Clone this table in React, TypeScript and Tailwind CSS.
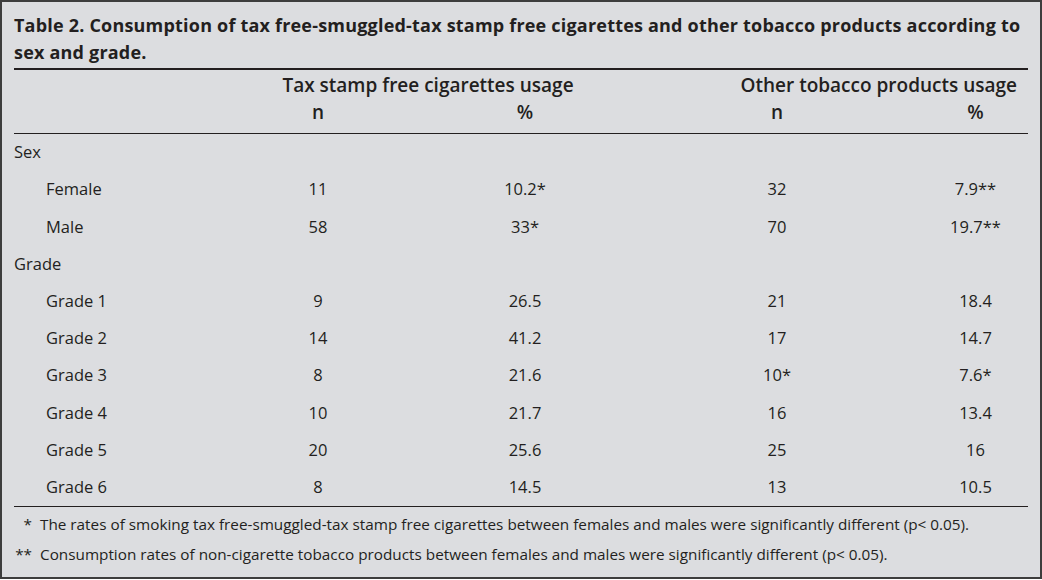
const rows = [
  { label: "Sex", group: true },
  { label: "Female", n1: "11", p1: "10.2*", n2: "32", p2: "7.9**" },
  { label: "Male", n1: "58", p1: "33*", n2: "70", p2: "19.7**" },
  { label: "Grade", group: true },
  { label: "Grade 1", n1: "9", p1: "26.5", n2: "21", p2: "18.4" },
  { label: "Grade 2", n1: "14", p1: "41.2", n2: "17", p2: "14.7" },
  { label: "Grade 3", n1: "8", p1: "21.6", n2: "10*", p2: "7.6*" },
  { label: "Grade 4", n1: "10", p1: "21.7", n2: "16", p2: "13.4" },
  { label: "Grade 5", n1: "20", p1: "25.6", n2: "25", p2: "16" },
  { label: "Grade 6", n1: "8", p1: "14.5", n2: "13", p2: "10.5" },
];

const notes = [
  {
    mark: "*",
    text: "The rates of smoking tax free-smuggled-tax stamp free cigarettes between females and males were significantly different (p< 0.05).",
  },
  {
    mark: "**",
    text: "Consumption rates of non-cigarette tobacco products between females and males were significantly different (p< 0.05).",
  },
];

const cols = "grid grid-cols-[204px_200px_214px_290px_107px]";

export default function App() {
  return (
    <div className="w-[1042px] h-[580px] bg-white font-['Open_Sans',sans-serif] text-[#231f20]">
      <div className="h-[579px] border-2 border-[#3d3d3d] bg-[#dcdde0] px-[12px] pt-[10px]">

        {/* Title */}
        <h1 className="text-[18px] leading-[27px] font-bold tracking-[0.2px]">
          Table 2. Consumption of tax free-smuggled-tax stamp free cigarettes and other tobacco products according to sex and grade.
        </h1>

        {/* Header */}
        <div className="mt-[2px] border-t-2 border-[#231f20] pt-[2px] pb-[7px] text-[19px] leading-[27px] font-semibold">
          <div className="grid grid-cols-[204px_414px_397px]">
            <div />
            <div className="text-center pl-[6px]">Tax stamp free cigarettes usage</div>
            <div className="text-right pr-[12px]">Other tobacco products usage</div>
          </div>
          <div className={cols}>
            <div />
            <div className="text-center">n</div>
            <div className="text-center">%</div>
            <div className="text-center">n</div>
            <div className="text-center">%</div>
          </div>
        </div>

        {/* Body */}
        <div className="border-t border-[#231f20] text-[16.5px]">
          {rows.map((r) => (
            <div key={r.label} className={`${cols} h-[37.2px] items-center`}>
              <div className={r.group ? "" : "pl-[32px]"}>{r.label}</div>
              <div className="text-center">{r.n1}</div>
              <div className="text-center">{r.p1}</div>
              <div className="text-center">{r.n2}</div>
              <div className="text-center">{r.p2}</div>
            </div>
          ))}
        </div>

        {/* Footnotes */}
        <div className="border-t border-[#231f20] pt-[2px] text-[15.3px] leading-[30px]">
          {notes.map((n) => (
            <div key={n.mark} className="flex">
              <span className="w-[18px] text-right">{n.mark}</span>
              <span className="pl-[8px]">{n.text}</span>
            </div>
          ))}
        </div>

      </div>
    </div>
  );
}
